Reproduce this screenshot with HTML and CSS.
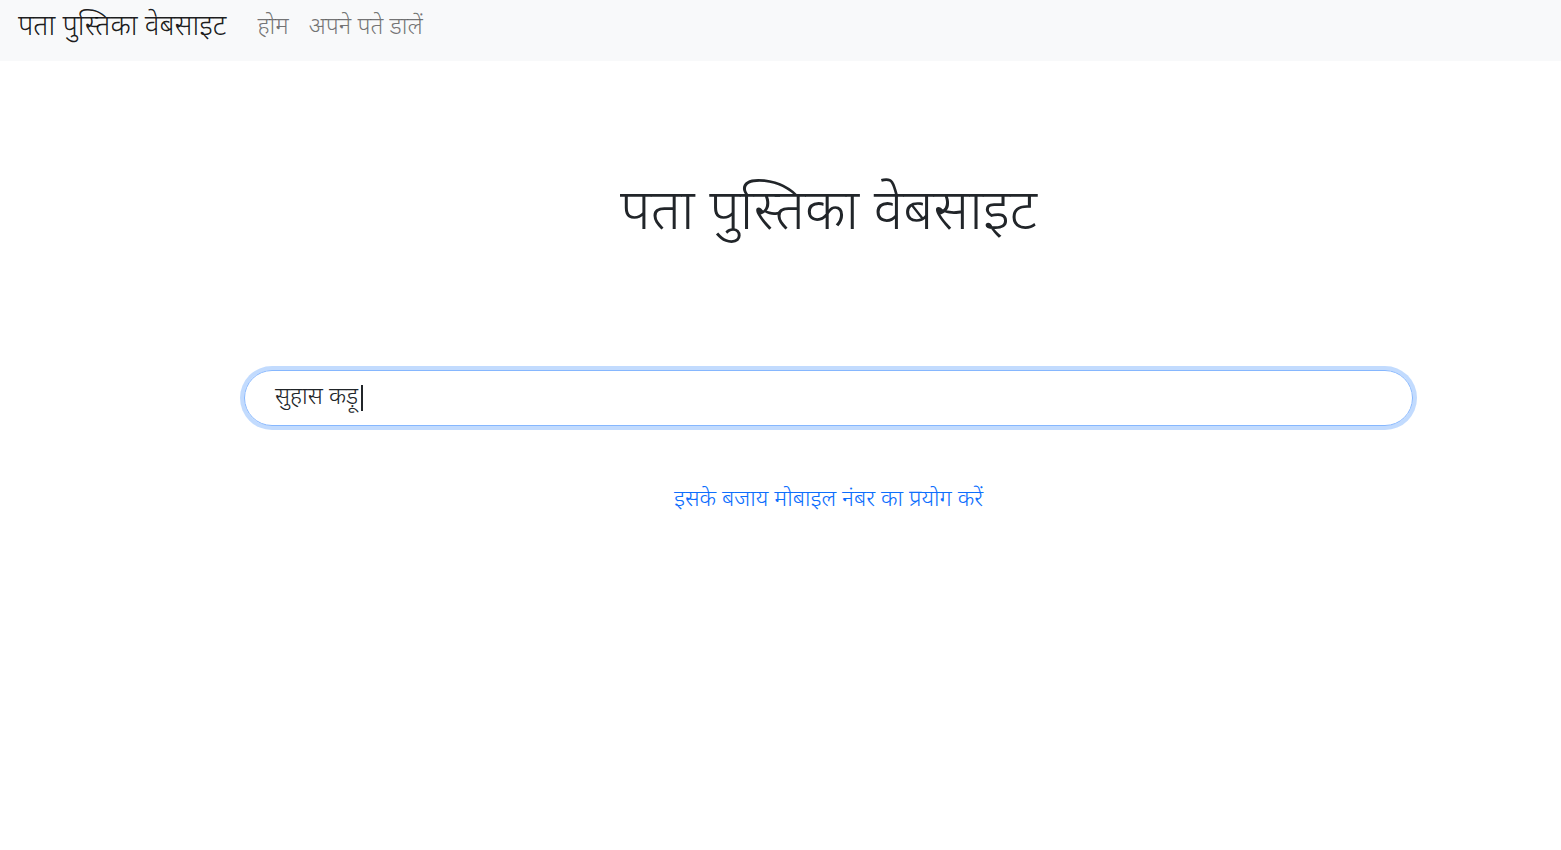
FILE: index.html
```html
<!DOCTYPE html>
<html lang="hi">
<head>
<meta charset="utf-8">
<title>पता पुस्तिका वेबसाइट</title>
<link rel="stylesheet" href="styles.css">
</head>
<body>
<nav class="navbar">
  <a class="brand" href="#">पता पुस्तिका वेबसाइट</a>
  <ul class="nav">
    <li><a href="#">होम</a></li>
    <li><a href="#">अपने पते डालें</a></li>
  </ul>
</nav>
<main class="main">
  <div class="content">
    <h1 class="title">पता पुस्तिका वेबसाइट</h1>
    <div class="search">
      <div class="input"><span>सुहास कड़ू</span><span class="caret"></span></div>
    </div>
    <a class="alt" href="#">इसके बजाय मोबाइल नंबर का प्रयोग करें</a>
  </div>
</main>
</body>
</html>
```
FILE: styles.css
```css
* { box-sizing: border-box; }
html, body { margin: 0; padding: 0; }
body {
  font-family: "Nirmala UI", "Noto Sans Devanagari", "Noto Sans", "Segoe UI", Roboto, sans-serif;
  color: #212529;
  background: #fff;
  width: 1561px;
  height: 850px;
  overflow: hidden;
}
a { text-decoration: none; }
.navbar {
  height: 61px;
  background: #f8f9fa;
  display: flex;
  align-items: center;
  padding: 0 18px 5px;
}
.brand {
  font-size: 28px;
  font-weight: 300;
  color: rgba(0,0,0,.9);
  margin-right: 21px;
}
.nav {
  display: flex;
  list-style: none;
  margin: 0;
  padding: 0;
  gap: 0;
}
.nav a {
  display: block;
  padding: 8px 10px;
  font-size: 23.8px;
  font-weight: 300;
  color: rgba(0,0,0,.55);
}
.main {
  padding-left: 96px;
}
.content {
  display: flex;
  flex-direction: column;
  align-items: center;
}
.title {
  font-weight: 300;
  font-size: 56px;
  line-height: 1.2;
  margin: 121px 0 0;
}
.search {
  margin-top: 117px;
  width: 1177px;
  padding: 4px;
}
.input {
  height: 56px;
  border: 1px solid #86b7fe;
  border-radius: 50px;
  box-shadow: 0 0 0 4px rgba(13,110,253,.25);
  display: flex;
  align-items: center;
  padding-left: 30px;
  font-size: 23.5px;
  font-weight: 300;
  color: #212529;
}
.caret {
  display: inline-block;
  width: 2px;
  height: 26px;
  background: #212529;
  margin-left: 3px;
}
.alt {
  margin-top: 56px;
  font-size: 22.8px;
  font-weight: 300;
  color: #0d6efd;
}
```
